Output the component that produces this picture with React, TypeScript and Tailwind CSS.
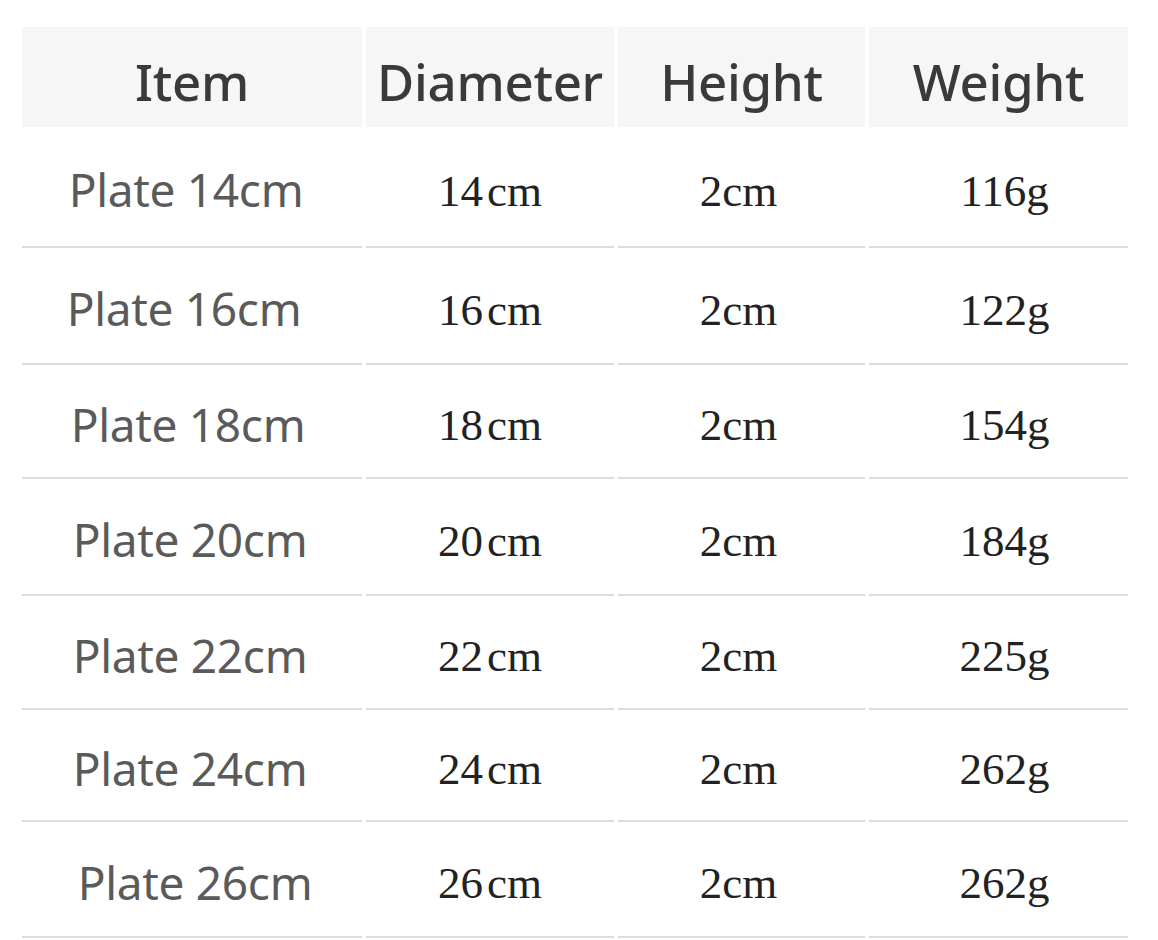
const COLS = ["Item", "Diameter", "Height", "Weight"];

// dx nudges the item label the way the source image does
const ROWS = [
  { item: "Plate 14cm", dia: "14", h: 121, w: "116g", dx: 0 },
  { item: "Plate 16cm", dia: "16", h: 117, w: "122g", dx: -2 },
  { item: "Plate 18cm", dia: "18", h: 114, w: "154g", dx: 2 },
  { item: "Plate 20cm", dia: "20", h: 117, w: "184g", dx: 4 },
  { item: "Plate 22cm", dia: "22", h: 114, w: "225g", dx: 4 },
  { item: "Plate 24cm", dia: "24", h: 112, w: "262g", dx: 4 },
  { item: "Plate 26cm", dia: "26", h: 116, w: "262g", dx: 9 },
];

const sans = "font-['Noto_Sans','Open_Sans',sans-serif]";
const serif = "font-['Liberation_Serif','Times_New_Roman',serif]";

export default function App() {
  return (
    <div className="w-[1158px] h-[940px] bg-white pt-[27px] pl-[22px] overflow-hidden">
      <div className="grid grid-cols-[340px_248px_247px_259px] gap-x-[4px]">
        {COLS.map((c) => (
          <div
            key={c}
            className={`h-[100px] bg-[#f6f6f6] flex items-center justify-center text-[51px] font-medium text-[#3a3a3a] tracking-[-0.3px] ${sans}`}
          >
            <span className="mt-[9px]">{c}</span>
          </div>
        ))}

        {ROWS.map((r) => (
          <div key={r.item} className="contents">
            <div
              className={`flex items-center justify-center border-b-2 border-[#dcdcdc] pr-[12px] text-[46px] text-[#5a5a5a] tracking-[-0.3px] ${sans}`}
              style={{ height: r.h }}
            >
              <span className="mt-[6px]" style={{ marginLeft: r.dx * 2 }}>
                {r.item}
              </span>
            </div>
            <div
              className={`flex items-center justify-center border-b-2 border-[#dcdcdc] text-[45px] text-[#222] ${serif}`}
              style={{ height: r.h }}
            >
              <span className="mt-[10px]">
                {r.dia}
                <span className="ml-[4px]">cm</span>
              </span>
            </div>
            <div
              className={`flex items-center justify-center border-b-2 border-[#dcdcdc] text-[45px] text-[#222] ${serif}`}
              style={{ height: r.h }}
            >
              <span className="mt-[10px] -ml-[6px]">2cm</span>
            </div>
            <div
              className={`flex items-center justify-center border-b-2 border-[#dcdcdc] pl-[12px] text-[45px] text-[#222] ${serif}`}
              style={{ height: r.h }}
            >
              <span className="mt-[10px]">{r.w}</span>
            </div>
          </div>
        ))}
      </div>
    </div>
  );
}
